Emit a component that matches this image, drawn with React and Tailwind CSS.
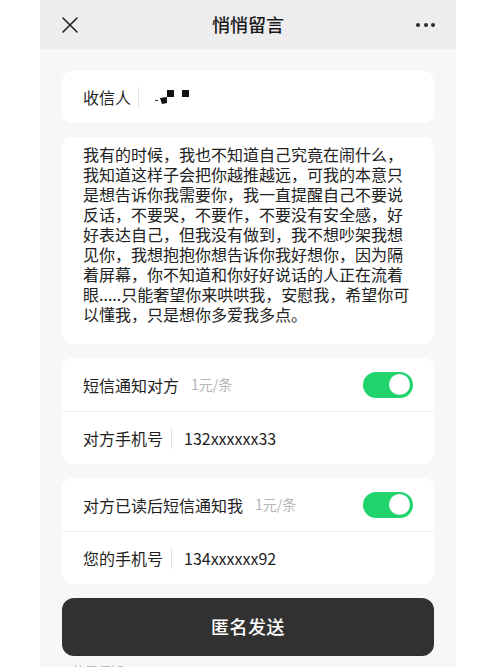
import React from "react";

const font = { fontFamily: '"Noto Sans CJK SC", "Noto Sans", sans-serif' };

function Toggle() {
  return (
    <div className="w-[50px] h-[26px] rounded-full bg-[#21d36b] flex items-center justify-end pr-[3px]">
      <div className="w-[21px] h-[21px] rounded-full bg-white" />
    </div>
  );
}

function Divider() {
  return <div className="w-px h-[21px] bg-[#e3e3e3]" />;
}

function NotifyCard({ label, phoneLabel, phone }) {
  return (
    <div className="bg-white rounded-[10px] flex flex-col">
      <div className="h-[53px] flex items-center justify-between pl-[21px] pr-[21px]">
        <div className="flex items-center">
          <span className="text-[16px] text-[#1f1f1f]">{label}</span>
          <span className="text-[14px] text-[#b5b5b5] ml-[12px]">1元/条</span>
        </div>
        <Toggle />
      </div>
      <div className="h-px bg-[#eeeeee]" />
      <div className="h-[52px] flex items-center pl-[21px]">
        <span className="text-[16px] text-[#1f1f1f]">{phoneLabel}</span>
        <div className="ml-[8px]">
          <Divider />
        </div>
        <span className="text-[16px] text-[#1f1f1f] ml-[12px]">{phone}</span>
      </div>
    </div>
  );
}

export default function App() {
  const msg =
    "我有的时候，我也不知道自己究竟在闹什么，我知道这样子会把你越推越远，可我的本意只是想告诉你我需要你，我一直提醒自己不要说反话，不要哭，不要作，不要没有安全感，好好表达自己，但我没有做到，我不想吵架我想见你，我想抱抱你想告诉你我好想你，因为隔着屏幕，你不知道和你好好说话的人正在流着眼.....只能奢望你来哄哄我，安慰我，希望你可以懂我，只是想你多爱我多点。";
  return (
    <div className="w-[500px] h-[667px] bg-white pl-[40px] overflow-hidden" style={font}>
      <div className="w-[416px] h-full bg-[#f7f7f7] flex flex-col">
        <div className="h-[49px] bg-[#ededed] grid grid-cols-[60px_1fr_60px] items-center shrink-0">
          <div className="pl-[22px] flex items-center">
            <svg width="16" height="16" viewBox="0 0 16 16">
              <path d="M1 1 L15 15 M15 1 L1 15" stroke="#222" strokeWidth="1.6" strokeLinecap="round" />
            </svg>
          </div>
          <div className="text-center text-[18px] font-medium text-[#1a1a1a]">悄悄留言</div>
          <div className="flex justify-end pr-[21px] gap-[3.5px]">
            <span className="w-[4px] h-[4px] rounded-full bg-[#2a2a2a]" />
            <span className="w-[4px] h-[4px] rounded-full bg-[#2a2a2a]" />
            <span className="w-[4px] h-[4px] rounded-full bg-[#2a2a2a]" />
          </div>
        </div>

        <div className="flex flex-col gap-[14px] px-[22px] pt-[22px]">
          <div className="h-[52px] bg-white rounded-[10px] flex items-center pl-[21px]">
            <span className="text-[16px] text-[#1f1f1f]">收信人</span>
            <div className="ml-[7px]">
              <Divider />
            </div>
            <svg className="ml-[16px]" width="36" height="16" viewBox="0 0 36 16">
              <rect x="0" y="11" width="3" height="1" fill="#333" />
              <path d="M5 9 L12 8 L12 14 L7 15 Z" fill="#111" />
              <rect x="12" y="1" width="7" height="7" fill="#111" />
              <rect x="27" y="1" width="7" height="7" fill="#111" />
            </svg>
          </div>

          <div className="bg-white rounded-[10px] pl-[21px] pr-[21px] pt-[7px] pb-[20px]">
            <p className="text-[16px] leading-[20px] text-[#222]">{msg}</p>
          </div>

          <NotifyCard label="短信通知对方" phoneLabel="对方手机号" phone="132xxxxxx33" />
          <NotifyCard label="对方已读后短信通知我" phoneLabel="您的手机号" phone="134xxxxxx92" />

          <div className="h-[58px] rounded-[12px] bg-[#313131] flex items-center justify-center">
            <span className="text-white text-[18px] font-medium tracking-[0.5px] -mt-[2px]">匿名发送</span>
          </div>
        </div>
        <div className="pl-[32px] mt-[5px] text-[13px] text-[#b8b8b8]">使用须知</div>
      </div>
    </div>
  );
}
